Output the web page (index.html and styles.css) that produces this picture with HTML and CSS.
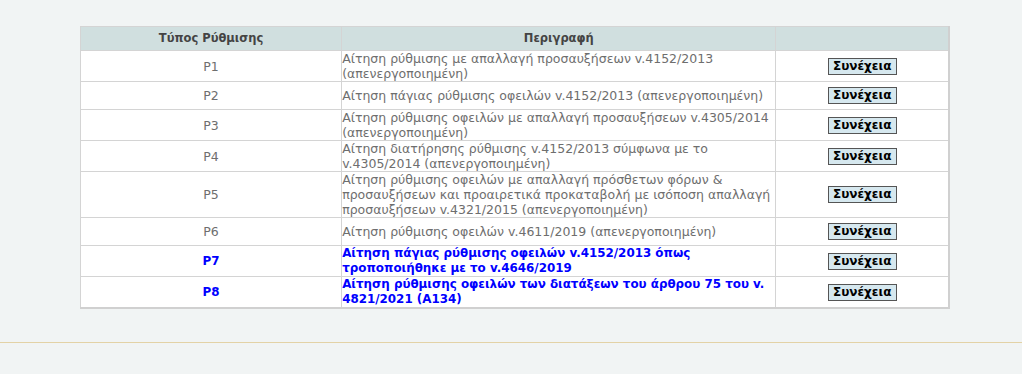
FILE: index.html
```html
<!DOCTYPE html>
<html lang="el">
<head>
<meta charset="utf-8">
<title>Ρυθμίσεις</title>
<link rel="stylesheet" href="styles.css">
</head>
<body>
<div class="page">
  <div class="content">
    <table class="grid">
      <colgroup>
        <col class="c1"><col class="c2"><col class="c3">
      </colgroup>
      <thead>
        <tr><th>Τύπος Ρύθμισης</th><th>Περιγραφή</th><th></th></tr>
      </thead>
      <tbody>
        <tr><td class="code">P1</td><td class="desc">Αίτηση ρύθμισης με απαλλαγή προσαυξήσεων v.4152/2013 (απενεργοποιημένη)</td><td class="act"><button class="btn">Συνέχεια</button></td></tr>
        <tr><td class="code">P2</td><td class="desc">Αίτηση πάγιας ρύθμισης οφειλών v.4152/2013 (απενεργοποιημένη)</td><td class="act"><button class="btn">Συνέχεια</button></td></tr>
        <tr><td class="code">P3</td><td class="desc">Αίτηση ρύθμισης οφειλών με απαλλαγή προσαυξήσεων v.4305/2014 (απενεργοποιημένη)</td><td class="act"><button class="btn">Συνέχεια</button></td></tr>
        <tr><td class="code">P4</td><td class="desc">Αίτηση διατήρησης ρύθμισης v.4152/2013 σύμφωνα με το v.4305/2014 (απενεργοποιημένη)</td><td class="act"><button class="btn">Συνέχεια</button></td></tr>
        <tr><td class="code">P5</td><td class="desc">Αίτηση ρύθμισης οφειλών με απαλλαγή πρόσθετων φόρων &amp; προσαυξήσεων και προαιρετικά προκαταβολή με ισόποση απαλλαγή προσαυξήσεων v.4321/2015 (απενεργοποιημένη)</td><td class="act"><button class="btn">Συνέχεια</button></td></tr>
        <tr><td class="code">P6</td><td class="desc">Αίτηση ρύθμισης οφειλών v.4611/2019 (απενεργοποιημένη)</td><td class="act"><button class="btn">Συνέχεια</button></td></tr>
        <tr class="active"><td class="code">P7</td><td class="desc">Αίτηση πάγιας ρύθμισης οφειλών v.4152/2013 όπως τροποποιήθηκε με το v.4646/2019</td><td class="act"><button class="btn">Συνέχεια</button></td></tr>
        <tr class="active"><td class="code">P8</td><td class="desc">Αίτηση ρύθμισης οφειλών των διατάξεων του άρθρου 75 του v. 4821/2021 (A134)</td><td class="act"><button class="btn">Συνέχεια</button></td></tr>
      </tbody>
    </table>
  </div>
  <div class="rule"></div>
</div>
</body>
</html>
```

FILE: styles.css
```css
html, body {
  margin: 0;
  padding: 0;
  background: #f1f4f4;
}
body {
  font-family: "DejaVu Sans", Verdana, sans-serif;
  font-size: 12.5px;
  line-height: 15px;
  color: #6e6e6e;
}
.page {
  width: 1022px;
  height: 374px;
}
.content {
  padding: 26px 0 0 80px;
  height: 290px;
}
.grid {
  width: 870px;
  border-collapse: collapse;
  table-layout: fixed;
  background: #fff;
  border-top: 1px solid #d4d4d4;
  border-left: 1px solid #d4d4d4;
  border-right: 2px solid #d0d0d0;
  border-bottom: 2px solid #d0d0d0;
}
.c1 { width: 261px; }
.c2 { width: 434px; }
.c3 { width: 173px; }
.grid th {
  background: #d0dfdf;
  color: #444;
  font-size: 11.5px;
  font-weight: bold;
  height: 23px;
  padding: 0;
  text-align: center;
  border-right: 1px solid #d4d4d4;
}
.grid td {
  padding: 0;
  border: 1px solid #d4d4d4;
  vertical-align: middle;
}
.grid td.code { text-align: center; }
.grid td.desc { text-align: left; }
.grid td.act { text-align: center; }
.grid tr.active td {
  color: #0000ff;
  font-weight: bold;
  font-size: 11.9px;
}
.btn {
  margin: 5px 0;
  width: 69px;
  height: 17px;
  padding: 0;
  background: #d6e8ef;
  border: 1px solid #555;
  border-radius: 0;
  font-family: "DejaVu Sans", Verdana, sans-serif;
  font-size: 12px;
  font-weight: bold;
  color: #000;
  line-height: 15px;
}
.rule {
  height: 1px;
  margin-top: 26px;
  background: #e3d2a6;
}
```
